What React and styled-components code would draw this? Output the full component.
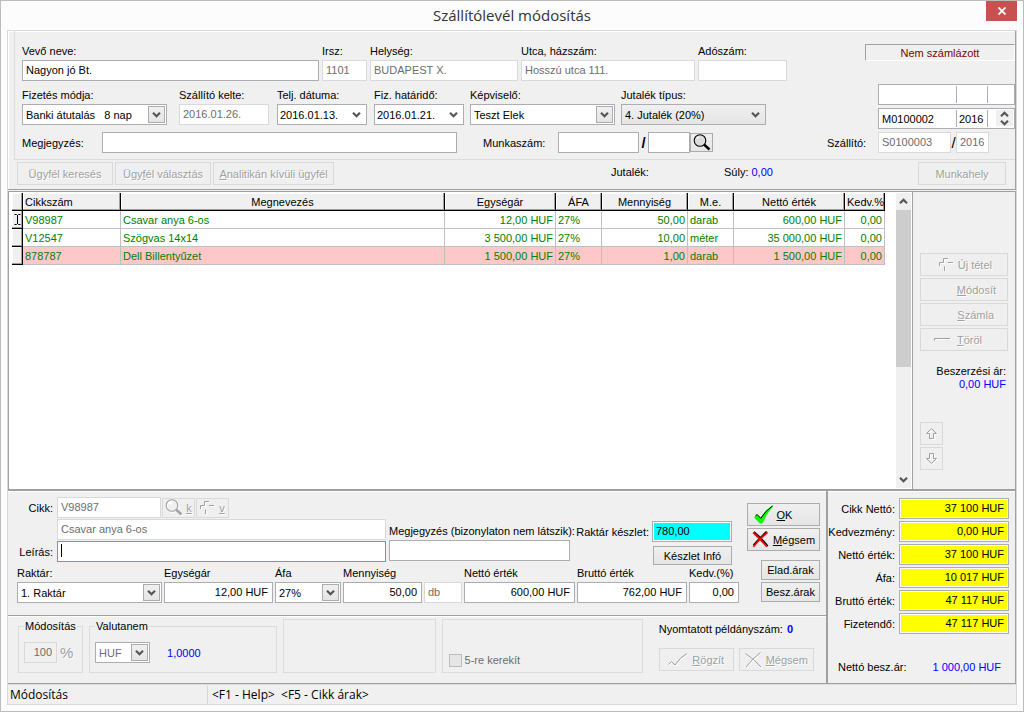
import React from 'react';
import styled, { createGlobalStyle, css } from 'styled-components';

const columns = [
  { title: 'Cikkszám', width: '98px', head: 'left' },
  { title: 'Megnevezés' },
  { title: 'Egységár', width: '111px', align: 'right' },
  { title: 'ÁFA', width: '46px' },
  { title: 'Mennyiség', width: '86px', align: 'right' },
  { title: 'M.e.', width: '46px' },
  { title: 'Nettó érték', width: '111px', align: 'right' },
  { title: 'Kedv.%', width: '40px', align: 'right' },
];

const rows = [
  ['V98987', 'Csavar anya 6-os', '12,00 HUF', '27%', '50,00', 'darab', '600,00 HUF', '0,00'],
  ['V12547', 'Szögvas 14x14', '3 500,00 HUF', '27%', '10,00', 'méter', '35 000,00 HUF', '0,00'],
  ['878787', 'Dell Billentyűzet', '1 500,00 HUF', '27%', '1,00', 'darab', '1 500,00 HUF', '0,00'],
];

const totals = [
  { id: 'cikk-netto', label: 'Cikk Nettó:', value: '37 100 HUF' },
  { id: 'kedvezmeny', label: 'Kedvezmény:', value: '0,00 HUF' },
  { id: 'ossz-netto', label: 'Nettó érték:', value: '37 100 HUF' },
  { id: 'ossz-afa', label: 'Áfa:', value: '10 017 HUF' },
  { id: 'ossz-brutto', label: 'Bruttó érték:', value: '47 117 HUF' },
  { id: 'fizetendo', label: 'Fizetendő:', value: '47 117 HUF' },
];

const GlobalStyle = createGlobalStyle`
  * {
    box-sizing: border-box;
  }

  body {
    margin: 0;
    background: #fcfcfc;
    color: #000;
    font: 11px/14px 'Liberation Sans', Arial, sans-serif;
  }

  input, select, button {
    margin: 0;
    font: inherit;
    color: inherit;
  }

  svg {
    display: block;
    flex: none;
  }
`;

/* ---------- window ---------- */

const Window = styled.div`
  display: flex;
  flex-direction: column;
  min-height: 100vh;
  border: 1px solid #bcbcbc;
  background: #fcfcfc;
`;

const TitleBar = styled.header`
  display: grid;
  grid-template-columns: 45px 1fr 45px;
  align-items: start;
  height: 29px;
  padding: 0 6px;
`;

const Title = styled.h1`
  grid-column: 2;
  margin: 0;
  color: #333;
  font: 15px/29px 'Open Sans', 'Noto Sans', sans-serif;
  text-align: center;
`;

const CloseButton = styled.button`
  display: flex;
  align-items: center;
  justify-content: center;
  width: 31px;
  height: 20px;
  margin-left: auto;
  padding: 0;
  border: 0;
  background: #c75050;
`;

const Client = styled.main`
  flex: 1;
  display: flex;
  flex-direction: column;
  margin: 0 6px 6px;
  border: 1px solid #d9d9d9;
  background: #f0f0f0;
`;

/* ---------- controls ---------- */

const Label = styled.label`
  white-space: nowrap;
  width: ${(p) => p.$width || 'auto'};
  flex: none;
  text-align: ${(p) => p.$align || 'left'};
`;

const Input = styled.input`
  width: ${(p) => p.$width || '100%'};
  min-width: 0;
  height: 21px;
  padding: 0 4px 1px 3px;
  border: 1px solid #abadb3;
  border-radius: 0;
  outline: 0;
  background: ${(p) => p.$fill || '#fff'};
  box-shadow: inset 0 0 0 1px #fff;
  text-align: ${(p) => (p.$right ? 'right' : 'left')};

  &:disabled {
    border-color: #d9d9d9;
    color: #6d6d6d;
  }
`;

const ActiveInput = styled(Input)`
  border-color: #569de5;
  background: linear-gradient(#000, #000) no-repeat 3px 2px / 1px 13px, #fff;
  caret-color: transparent;
`;

const Button = styled.button`
  display: flex;
  align-items: center;
  justify-content: center;
  gap: ${(p) => p.$gap || '4px'};
  flex: none;
  width: ${(p) => p.$width || 'auto'};
  height: ${(p) => p.$height || '23px'};
  padding: 0 ${(p) => p.$pad || '2px'};
  border: 1px solid #acacac;
  border-radius: 0;
  background: linear-gradient(#f0f0f0, #e5e5e5);
  white-space: nowrap;

  ${(p) =>
    p.$end &&
    css`
      justify-content: flex-end;
    `}

  &:disabled {
    border-color: #d9d9d9;
    background: #efefef;
    color: #a0a0a0;
    text-shadow: 1px 1px 0 #fff;
  }

  &:disabled svg {
    filter: drop-shadow(1px 1px 0 #fff);
  }
`;

const SelectBox = styled.span`
  display: grid;
  align-items: center;
  justify-items: end;
  flex: none;
  width: ${(p) => p.$width || '100%'};

  > * {
    grid-area: 1 / 1;
  }
`;

const SelectControl = styled.select`
  appearance: none;
  width: 100%;
  height: 21px;
  padding: 0 18px 0 ${(p) => (p.$look === 'plain' ? '2px' : '3px')};
  border: 1px solid #abadb3;
  border-radius: 0;
  outline: 0;
  background: ${(p) => (p.$look === 'flat' ? 'linear-gradient(#f0f0f0, #e5e5e5)' : '#fff')};

  &:disabled {
    color: #6d6d6d;
    opacity: 1;
  }
`;

const Arrow = styled.span`
  display: flex;
  align-items: center;
  justify-content: center;
  width: 17px;
  height: 17px;
  margin-right: 2px;
  pointer-events: none;

  ${(p) =>
    p.$boxed &&
    css`
      border: 1px solid #acacac;
      background: linear-gradient(#f0f0f0, #e5e5e5);
    `}
`;

const Field = styled.div`
  display: flex;
  flex-direction: column;
  gap: 2px;
  min-width: 0;
`;

const Blue = styled.span`
  color: #00f;
  font-weight: ${(p) => (p.$bold ? 'bold' : 'normal')};
`;

/* ---------- head ---------- */

const HeadPanel = styled.section`
  border-right: 1px solid #a0a0a0;
  border-bottom: 1px solid #a0a0a0;
  box-shadow: inset 1px 1px 0 #fff;
`;

const HeadBody = styled.div`
  display: grid;
  grid-template-columns: minmax(0, 1fr) 188px;
  column-gap: 40px;
  margin-left: 6px;
  padding: 13px 0 6px 7px;
  border-left: 1px solid #dcdcdc;
  border-bottom: 1px solid #dcdcdc;
`;

const HeadFields = styled.div`
  display: flex;
  flex-direction: column;
  gap: 7px;
`;

const CustomerRow = styled.div`
  display: grid;
  grid-template-columns: 297fr 45fr 148fr 174fr 89fr;
  gap: 3px;
`;

const TermsRow = styled.div`
  display: grid;
  grid-template-columns: 157fr 98fr 97fr 96fr 151fr 166fr;
`;

const NoteRow = styled.div`
  display: flex;
  align-items: center;
  padding-right: 74px;
`;

const WorkNumber = styled.div`
  display: flex;
  align-items: center;
  flex: none;
  margin-left: 26px;
`;

const Slash = styled.span`
  width: ${(p) => (p.$bold ? '9px' : '5px')};
  font-size: 15px;
  font-weight: ${(p) => (p.$bold ? 'bold' : 'normal')};
  text-align: center;
`;

const HeadSide = styled.div`
  display: flex;
  flex-direction: column;
  align-items: flex-end;
  gap: 3px;
`;

const BillState = styled.div`
  width: 150px;
  height: 17px;
  margin-bottom: auto;
  border: 1px solid;
  border-color: #a0a0a0 #fff #fff #a0a0a0;
  color: #800000;
  line-height: 16px;
  text-align: center;
`;

const NumberBox = styled.div`
  display: grid;
  grid-template-columns: 76px 31px 1fr;
  width: 137px;
  height: 21px;
  padding: 1px;
  border: 1px solid #abadb3;
  background: #fff;
`;

const NumberPart = styled.span`
  display: flex;
  min-width: 0;

  & + & {
    border-left: 1px solid #abadb3;
  }
`;

const BareInput = styled.input`
  min-width: 0;
  width: 100%;
  height: 17px;
  padding: 0 2px;
  border: 0;
  outline: 0;
  background: transparent;
`;

const Spinner = styled.span`
  display: flex;
  flex-direction: column;
  margin-left: auto;
`;

const SpinButton = styled.button`
  display: flex;
  align-items: flex-end;
  justify-content: center;
  width: 17px;
  height: 8px;
  padding: 0;
  border: 0;
  background: #f0f0f0;
`;

const DeliveryRow = styled.div`
  display: flex;
  align-items: center;
  width: 100%;
`;

const HeadTools = styled.div`
  display: flex;
  align-items: center;
  gap: 2px;
  padding: 2px 9px 4px;
`;

const Readout = styled.span`
  display: flex;
  gap: 3px;
  width: ${(p) => p.$width};
  padding-bottom: 4px;

  ${(p) =>
    p.$first &&
    css`
      margin-left: auto;
    `}
`;

/* ---------- items ---------- */

const ItemsPanel = styled.section`
  flex: 1;
  display: grid;
  grid-template-columns: minmax(0, 1fr) 103px;
  margin-top: 1px;
  border-bottom: 2px solid #a0a0a0;
`;

const GridFrame = styled.div`
  display: grid;
  grid-template-columns: minmax(0, 1fr) 15px;
  padding: 1px;
  border: 1px solid #a0a0a0;
  border-width: 1px 1px 0;
  background: #fff;
`;

const GridArea = styled.div`
  padding: 0 11px 0 2px;
`;

const Table = styled.table`
  width: 100%;
  border-collapse: separate;
  border-spacing: 0;
  table-layout: fixed;
`;

const HeadCell = styled.th`
  height: 18px;
  padding: 0 2px;
  border-right: 1px solid #000;
  border-bottom: 1px solid #000;
  background: #f0f0f0;
  box-shadow: inset -1px -1px 0 #a0a0a0, inset 1px 1px 0 #fff;
  font-weight: normal;
  text-align: ${(p) => p.$align || 'center'};
  white-space: nowrap;
`;

const MarkCell = styled(HeadCell)`
  padding: 0 0 0 2px;
`;

const Cell = styled.td`
  height: 18px;
  padding: 0 2px;
  overflow: hidden;
  border-right: 1px solid #c0c0c0;
  border-bottom: 1px solid #c0c0c0;
  color: #008000;
  text-align: ${(p) => p.$align || 'left'};
  white-space: nowrap;
`;

const Row = styled.tr`
  background: ${(p) => (p.$warn ? '#ffc8c8' : '#fff')};
`;

const ScrollBar = styled.div`
  display: flex;
  flex-direction: column;
  background: #f0f0f0;
`;

const ScrollButton = styled.button`
  display: flex;
  align-items: center;
  justify-content: center;
  height: 17px;
  padding: 0;
  border: 0;
  background: transparent;
`;

const ScrollTrack = styled.div`
  flex: 1;
`;

const ScrollThumb = styled.div`
  height: 60%;
  background: #cdcdcd;
`;

const ItemsSide = styled.aside`
  display: flex;
  flex-direction: column;
  gap: 2px;
  padding: 61px 7px 19px 7px;
  border-top: 1px solid #a0a0a0;
  border-right: 1px solid #a0a0a0;
`;

const CostPrice = styled.div`
  display: flex;
  flex-direction: column;
  margin-top: 12px;
  padding-right: 2px;
  line-height: 13px;
  text-align: right;
`;

const MoveButtons = styled.div`
  display: flex;
  flex-direction: column;
  gap: 2px;
  margin-top: auto;
`;

/* ---------- bottom ---------- */

const Bottom = styled.div`
  display: grid;
  grid-template-columns: minmax(0, 1fr) 188px;
  border-bottom: 1px solid #a0a0a0;
  box-shadow: inset 0 1px 0 #fff;
`;

const Editor = styled.div`
  border-right: 2px solid #a0a0a0;
`;

const ItemForm = styled.section`
  display: grid;
  grid-template-columns: minmax(0, 1fr) 73px;
  column-gap: 8px;
  padding: 6px 6px 12px 9px;
  border-bottom: 1px solid #a0a0a0;
`;

const FormTop = styled.div`
  display: grid;
  grid-template-columns: 369fr 181fr 159fr;
  column-gap: 3px;
  padding-right: 7px;
`;

const ItemLines = styled.div`
  display: flex;
  flex-direction: column;
  gap: 1px;
`;

const Line = styled.div`
  display: flex;
  align-items: center;
  gap: 1px;
  padding-left: ${(p) => p.$indent || '0'};
`;

const ItemLabel = styled(Label)`
  width: 39px;
  padding-right: 3px;
  text-align: right;
`;

const NoteField = styled(Field)`
  padding-top: 27px;
`;

const Stock = styled.div`
  display: flex;
  flex-direction: column;
  align-items: flex-end;
  gap: 4px;
  padding-top: 24px;
`;

const StockLine = styled.div`
  display: flex;
  align-items: center;
  justify-content: flex-end;
  gap: 3px;
  width: 100%;
`;

const PriceRow = styled.div`
  display: grid;
  grid-template-columns: 145fr 109fr 66fr 79fr 38fr 111fr 110fr 50fr;
  gap: 2px;
  align-items: end;
  margin-top: 1px;
`;

const FormButtons = styled.div`
  display: flex;
  flex-direction: column;
  align-items: flex-end;
  gap: 2px;
  padding-top: 6px;
`;

const PriceButtons = styled.div`
  display: flex;
  flex-direction: column;
  gap: 2px;
  margin-top: 7px;
`;

const Settings = styled.section`
  display: grid;
  grid-template-columns: 65fr 188fr 152fr 201fr 173fr;
  column-gap: 6px;
  padding: 3px 4px 10px 10px;
  box-shadow: inset 0 1px 0 #fff;
`;

const Group = styled.fieldset`
  display: flex;
  align-items: center;
  gap: 3px;
  min-width: 0;
  height: 54px;
  margin: 0;
  padding: 0 ${(p) => (p.$legend ? '5px 0' : '6px 5px')};
  border: 1px solid #dcdcdc;
`;

const Legend = styled.legend`
  padding: 0 1px;
`;

const PercentInput = styled(Input)`
  box-shadow: none;
`;

const Percent = styled.span`
  color: #a0a0a0;
  font-size: 15px;
  text-shadow: 1px 1px 0 #fff;
`;

const Rate = styled(Blue)`
  margin-left: 14px;
`;

const RoundLabel = styled.label`
  display: flex;
  align-items: center;
  gap: 3px;
  margin-top: auto;
  color: #6d6d6d;
`;

const CheckBox = styled.input`
  appearance: none;
  width: 13px;
  height: 13px;
  border: 1px solid #bcbcbc;
  background: #e6e6e6;
`;

const PrintArea = styled.div`
  display: flex;
  flex-direction: column;
  justify-content: space-between;
  padding: 3px 0 2px 10px;
`;

const PrintText = styled.div`
  display: flex;
  gap: 4px;
`;

const PrintButtons = styled.div`
  display: flex;
  gap: 5px;
`;

const Totals = styled.section`
  display: flex;
  flex-direction: column;
  gap: 2px;
  padding: 7px 6px 0 0;
  border-right: 1px solid #a0a0a0;
`;

const TotalRow = styled.div`
  display: grid;
  grid-template-columns: minmax(0, 1fr) 110px;
  column-gap: 4px;
  align-items: center;
`;

const PurchaseRow = styled.div`
  display: flex;
  justify-content: space-between;
  margin: auto 8px 9px 10px;
`;

const StatusBar = styled.footer`
  display: flex;
  align-items: stretch;
  height: 20px;
  padding-top: 1px;
  border-top: 1px solid #dcdcdc;
  font: 12px/18px 'Open Sans', 'Noto Sans', sans-serif;
`;

const StatusCell = styled.span`
  width: ${(p) => p.$width || 'auto'};
  padding-left: 2px;
  white-space: pre;

  & + & {
    padding-left: 4px;
    border-left: 1px solid #d7d7d7;
  }
`;

/* ---------- icons ---------- */

function Chevron({ up }) {
  return (
    <svg width="9" height="7" viewBox="0 0 9 7">
      <path
        d={up ? 'M1 5.2 4.5 1.8 8 5.2' : 'M1 1.8 4.5 5.2 8 1.8'}
        fill="none"
        stroke="#555"
        strokeWidth="2.2"
      />
    </svg>
  );
}

function Magnifier({ muted }) {
  const color = muted ? '#a0a0a0' : '#000';
  return (
    <svg width="18" height="17" viewBox="0 0 18 17">
      <circle cx="7" cy="6.5" r="5.8" fill={muted ? 'none' : '#dcdcdc'} stroke={color} strokeWidth="1.1" />
      <path d="M4 4.5 6 3" stroke="#fff" strokeWidth="1.5" />
      <path d="M11 10.5 16.5 15.5" stroke={color} strokeWidth="2.4" />
    </svg>
  );
}

function PlusIcon() {
  return (
    <svg width="15" height="15" viewBox="0 0 15 15" fill="none" stroke="#a0a0a0">
      <path d="M.5 9V5.5H4.5V1.5H9M9 5.5H14M5.5 9.5V14" />
    </svg>
  );
}

function MinusIcon() {
  return (
    <svg width="17" height="5" viewBox="0 0 17 5" fill="none" stroke="#a0a0a0">
      <path d="M.5 3.5V1.5H16" />
    </svg>
  );
}

function CheckIcon() {
  return (
    <svg width="20" height="20" viewBox="0 0 20 20">
      <path d="M0 12.5 3 9.5 6.5 13Q11 5.500 18 .8L19 1.500Q12 9 8.500 18.500H6Z" fill="#0f0" />
      <path d="M1.500 10.800 3.200 9.500 6.800 13.300Q11.500 5.500 18.500 1" fill="none" stroke="#000" />
    </svg>
  );
}

function CrossIcon() {
  return (
    <svg width="17" height="17" viewBox="0 0 17 17" fill="none">
      <path d="M2 .8Q9 6.500 15.800 15M14.500 .5Q7 7.500 1.500 14" stroke="#000" strokeWidth="1.4" />
      <path d="M1.200 1.500Q8 7.500 14.800 15.800M15.500 1.200Q7.500 8 1.300 15.800" stroke="#f00000" strokeWidth="1.8" />
    </svg>
  );
}

function MutedCheck() {
  return (
    <svg width="20" height="16" viewBox="0 0 20 16" fill="none" stroke="#a0a0a0">
      <path d="M.5 12.500 3.500 9.500 7 13Q12 5 19 1.500" />
    </svg>
  );
}

function MutedCross() {
  return (
    <svg width="17" height="16" viewBox="0 0 17 16" fill="none" stroke="#a0a0a0">
      <path d="M.5 1.500Q9 7 16 15M15.500 .5Q7 7 1 15" />
    </svg>
  );
}

function MoveArrow({ down }) {
  return (
    <svg width="13" height="12" viewBox="0 0 13 12" fill="none" stroke="#a0a0a0">
      <path
        d={
          down
            ? 'M4.500 .5H8.500V5.500H11.500L6.500 10.500 1.500 5.500H4.500Z'
            : 'M4.500 10.500H8.500V5.500H11.500L6.500 .5 1.500 5.500H4.500Z'
        }
      />
    </svg>
  );
}

/* look: boxed (arrow button inside), plain (bare arrow), flat (grey body) */
function Select({ id, value, width, look = 'boxed', ...rest }) {
  return (
    <SelectBox $width={width}>
      <SelectControl id={id} $look={look} defaultValue={value} {...rest}>
        <option>{value}</option>
      </SelectControl>
      <Arrow $boxed={look === 'boxed'}>
        <Chevron />
      </Arrow>
    </SelectBox>
  );
}

function TextField({ id, label, value = '', ...rest }) {
  return (
    <Field>
      <Label htmlFor={id}>{label}</Label>
      <Input id={id} defaultValue={value} {...rest} />
    </Field>
  );
}

function SelectField({ label, ...rest }) {
  return (
    <Field>
      <Label htmlFor={rest.id}>{label}</Label>
      <Select {...rest} />
    </Field>
  );
}

function Head() {
  return (
    <HeadPanel>
      <HeadBody>
        <HeadFields>
          <CustomerRow>
            <TextField id="vevo" label="Vevő neve:" value="Nagyon jó Bt." />
            <TextField id="irsz" label="Irsz:" value="1101" disabled />
            <TextField id="helyseg" label="Helység:" value="BUDAPEST X." disabled />
            <TextField id="utca" label="Utca, házszám:" value="Hosszú utca 111." disabled />
            <TextField id="adoszam" label="Adószám:" disabled />
          </CustomerRow>
          <TermsRow>
            <SelectField id="fizetes" label="Fizetés módja:" value={'Banki átutalás\u00a0\u00a0\u00a08 nap'} width="145px" />
            <TextField id="kelte" label="Szállító kelte:" value="2016.01.26." $width="90px" disabled />
            <SelectField id="teljesites" label="Telj. dátuma:" value="2016.01.13." look="plain" width="90px" />
            <SelectField id="hatarido" label="Fiz. határidő:" value="2016.01.21." look="plain" width="90px" />
            <SelectField id="kepviselo" label="Képviselő:" value="Teszt Elek" width="145px" />
            <SelectField id="jutalek-tipus" label="Jutalék típus:" value="4. Jutalék (20%)" look="flat" width="145px" />
          </TermsRow>
          <NoteRow>
            <Label htmlFor="megjegyzes" $width="80px">Megjegyzés:</Label>
            <Input id="megjegyzes" />
            <WorkNumber>
              <Label htmlFor="munkaszam" $width="75px">Munkaszám:</Label>
              <Input id="munkaszam" $width="81px" />
              <Slash $bold>/</Slash>
              <Input $width="42px" aria-label="Munkaszám" />
              <Button $width="23px" $height="19px" $pad="0" aria-label="Keresés">
                <Magnifier />
              </Button>
            </WorkNumber>
          </NoteRow>
        </HeadFields>
        <HeadSide>
          <BillState>Nem számlázott</BillState>
          <NumberBox>
            <NumberPart><BareInput aria-label="Szám" /></NumberPart>
            <NumberPart><BareInput aria-label="Év" /></NumberPart>
            <NumberPart />
          </NumberBox>
          <NumberBox>
            <NumberPart><BareInput defaultValue="M0100002" aria-label="Szám" /></NumberPart>
            <NumberPart><BareInput defaultValue="2016" aria-label="Év" /></NumberPart>
            <NumberPart>
              <Spinner>
                <SpinButton aria-label="Fel"><Chevron up /></SpinButton>
                <SpinButton aria-label="Le"><Chevron /></SpinButton>
              </Spinner>
            </NumberPart>
          </NumberBox>
          <DeliveryRow>
            <Label htmlFor="szallito" $width="51px">Szállító:</Label>
            <Input id="szallito" $width="73px" defaultValue="S0100003" disabled />
            <Slash>/</Slash>
            <Input $width="33px" defaultValue="2016" aria-label="Szállító" disabled />
          </DeliveryRow>
        </HeadSide>
      </HeadBody>
      <HeadTools>
        <Button $width="96px" disabled><span>Ü<u>g</u>yfél keresés</span></Button>
        <Button $width="96px" disabled><span>Ügy<u>f</u>él választás</span></Button>
        <Button $width="121px" disabled><span><u>A</u>nalitikán kívüli ügyfél</span></Button>
        <Readout $first $width="111px">Jutalék:</Readout>
        <Readout $width="192px">Súly: <Blue>0,00</Blue></Readout>
        <Button $width="88px" disabled>Munkahely</Button>
      </HeadTools>
    </HeadPanel>
  );
}

function Items() {
  return (
    <ItemsPanel>
      <GridFrame>
        <GridArea>
          <Table>
            <colgroup>
              <col style={{ width: 11 }} />
              {columns.map((c) => (
                <col key={c.title} style={{ width: c.width }} />
              ))}
            </colgroup>
            <thead>
              <tr>
                <MarkCell />
                {columns.map((c) => (
                  <HeadCell key={c.title} $align={c.head}>{c.title}</HeadCell>
                ))}
              </tr>
            </thead>
            <tbody>
              {rows.map((row, i) => (
                <Row key={row[0]} $warn={i === 2}>
                  <MarkCell as="td">
                    {i === 0 && (
                      <svg width="7" height="11" viewBox="0 0 7 11" fill="none" stroke="#000">
                        <path d="M.5 .5H2.500L3.500 1.500 4.500 .5H6.500M3.500 1V10M.5 10.500H2.500L3.500 9.500 4.500 10.500H6.500" />
                      </svg>
                    )}
                  </MarkCell>
                  {row.map((text, j) => (
                    <Cell key={columns[j].title} $align={columns[j].align}>{text}</Cell>
                  ))}
                </Row>
              ))}
            </tbody>
          </Table>
        </GridArea>
        <ScrollBar>
          <ScrollButton aria-label="Fel"><Chevron up /></ScrollButton>
          <ScrollTrack><ScrollThumb /></ScrollTrack>
          <ScrollButton aria-label="Le"><Chevron /></ScrollButton>
        </ScrollBar>
      </GridFrame>
      <ItemsSide>
        <Button $end $pad="15px" disabled><PlusIcon /><span>Új tétel</span></Button>
        <Button $end $pad="11px" disabled><span><u>M</u>ódosít</span></Button>
        <Button $end $pad="13px" disabled><span><u>S</u>zámla</span></Button>
        <Button $end $gap="6px" $pad="25px" disabled><MinusIcon /><span><u>T</u>öröl</span></Button>
        <CostPrice>
          <span>Beszerzési ár:</span>
          <Blue>0,00 HUF</Blue>
        </CostPrice>
        <MoveButtons>
          <Button $width="23px" aria-label="Mozgatás fel" disabled><MoveArrow /></Button>
          <Button $width="23px" aria-label="Mozgatás le" disabled><MoveArrow down /></Button>
        </MoveButtons>
      </ItemsSide>
    </ItemsPanel>
  );
}

function ItemEditor() {
  return (
    <ItemForm>
      <div>
        <FormTop>
          <ItemLines>
            <Line>
              <ItemLabel htmlFor="cikk">Cikk:</ItemLabel>
              <Input id="cikk" $width="104px" defaultValue="V98987" disabled />
              <Button $width="33px" $height="20px" $gap="3px" disabled><Magnifier muted /><u>k</u></Button>
              <Button $width="33px" $height="20px" disabled><PlusIcon /><u>v</u></Button>
            </Line>
            <Line $indent="40px">
              <Input defaultValue="Csavar anya 6-os" aria-label="Megnevezés" disabled />
            </Line>
            <Line>
              <ItemLabel htmlFor="leiras">Leírás:</ItemLabel>
              <ActiveInput id="leiras" />
            </Line>
          </ItemLines>
          <NoteField>
            <Label htmlFor="belso">Megjegyzés (bizonylaton nem látszik):</Label>
            <Input id="belso" />
          </NoteField>
          <Stock>
            <StockLine>
              <Label htmlFor="keszlet">Raktár készlet:</Label>
              <Input id="keszlet" $width="80px" $fill="#0ff" defaultValue="780,00" readOnly />
            </StockLine>
            <Button $width="79px" $height="19px">Készlet Infó</Button>
          </Stock>
        </FormTop>
        <PriceRow>
          <SelectField id="raktar" label="Raktár:" value="1. Raktár" />
          <TextField id="egysegar" label="Egységár" value="12,00 HUF" $right />
          <SelectField id="afa" label="Áfa" value="27%" />
          <TextField id="mennyiseg" label="Mennyiség" value="50,00" $right />
          <Input defaultValue="db" aria-label="Mennyiségi egység" disabled />
          <TextField id="netto" label="Nettó érték" value="600,00 HUF" $right />
          <TextField id="brutto" label="Bruttó érték" value="762,00 HUF" $right />
          <TextField id="kedv" label="Kedv.(%)" value="0,00" $right />
        </PriceRow>
      </div>
      <FormButtons>
        <Button $width="73px" $gap="3px" $pad="26px 0 5px"><CheckIcon /><span><u>O</u>K</span></Button>
        <Button $width="73px"><CrossIcon /><span><u>M</u>égsem</span></Button>
        <PriceButtons>
          <Button $width="59px" $height="20px">Elad.árak</Button>
          <Button $width="59px" $height="20px">Besz.árak</Button>
        </PriceButtons>
      </FormButtons>
    </ItemForm>
  );
}

function DocumentSettings() {
  return (
    <Settings>
      <Group $legend>
        <Legend>Módosítás</Legend>
        <PercentInput $width="33px" $fill="#f0f0f0" defaultValue="100" aria-label="Módosítás" $right disabled />
        <Percent>%</Percent>
      </Group>
      <Group $legend>
        <Legend>Valutanem</Legend>
        <Select id="valuta" value="HUF" width="55px" aria-label="Valutanem" disabled />
        <Rate>1,0000</Rate>
      </Group>
      <Group />
      <Group>
        <RoundLabel>
          <CheckBox type="checkbox" disabled />
          5-re kerekít
        </RoundLabel>
      </Group>
      <PrintArea>
        <PrintText>Nyomtatott példányszám: <Blue $bold>0</Blue></PrintText>
        <PrintButtons>
          <Button $width="75px" disabled><MutedCheck /><span><u>R</u>ögzít</span></Button>
          <Button $width="75px" disabled><MutedCross /><span><u>M</u>égsem</span></Button>
        </PrintButtons>
      </PrintArea>
    </Settings>
  );
}

function App() {
  return (
    <>
      <GlobalStyle />
      <Window>
        <TitleBar>
          <Title>Szállítólevél módosítás</Title>
          <CloseButton aria-label="Bezárás">
            <svg width="8" height="8" viewBox="0 0 8 8">
              <path d="M.5 .5 7.500 7.500M7.500 .5 .5 7.500" stroke="#fff" strokeWidth="1.8" />
            </svg>
          </CloseButton>
        </TitleBar>
        <Client>
          <Head />
          <Items />
          <Bottom>
            <Editor>
              <ItemEditor />
              <DocumentSettings />
            </Editor>
            <Totals>
              {totals.map((t) => (
                <TotalRow key={t.id}>
                  <Label htmlFor={t.id} $align="right">{t.label}</Label>
                  <Input id={t.id} $fill="#ff0" $right defaultValue={t.value} readOnly />
                </TotalRow>
              ))}
              <PurchaseRow>
                <span>Nettó besz.ár:</span>
                <Blue>1 000,00 HUF</Blue>
              </PurchaseRow>
            </Totals>
          </Bottom>
          <StatusBar>
            <StatusCell $width="199px">Módosítás</StatusCell>
            <StatusCell>{'<F1 - Help>  <F5 - Cikk árak>'}</StatusCell>
          </StatusBar>
        </Client>
      </Window>
    </>
  );
}

export default App;
